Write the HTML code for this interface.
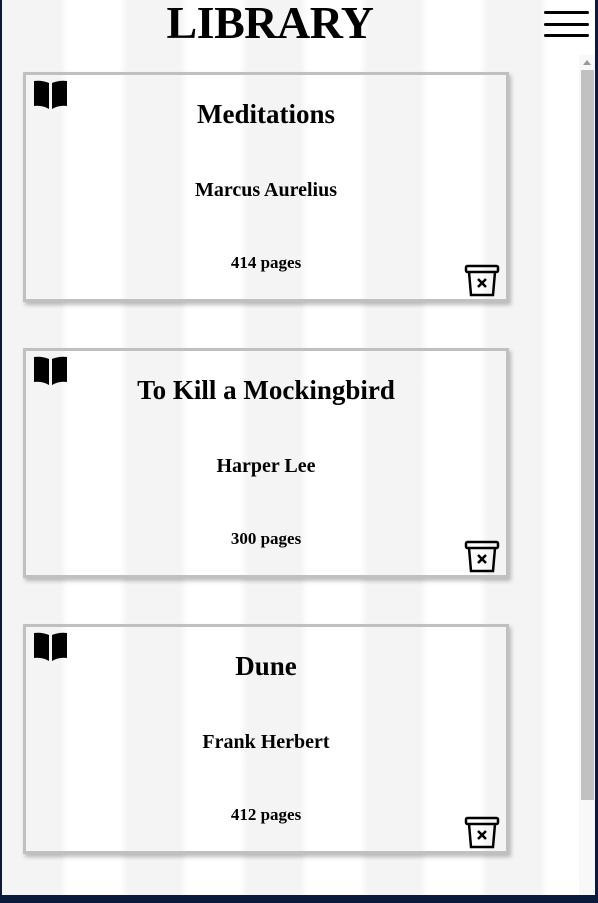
<!DOCTYPE html>
<html><head><style>
html,body{margin:0;padding:0;}
body{width:598px;height:903px;background:#0b1a3a;position:relative;overflow:hidden;font-family:"Liberation Serif",serif;}
#page{position:absolute;left:2px;top:0;width:593px;height:895px;
background:linear-gradient(to right,#f4f4f4 0,#f4f4f4 58px,#fff 66px,#fff 118px,#f4f4f4 126px,#f4f4f4 178px,#fff 186px,#fff 238px,#f4f4f4 246px,#f4f4f4 298px,#fff 306px,#fff 358px,#f4f4f4 366px,#f4f4f4 418px,#fff 426px,#fff 478px,#f4f4f4 486px,#f4f4f4 538px,#fff 546px);}
h1{position:absolute;left:0;width:536px;top:-4px;margin:0;text-align:center;font-size:46px;font-weight:bold;letter-spacing:-0.5px;}
.ham{position:absolute;left:542px;width:45px;height:3px;background:#000;border-radius:2px;}
.sb{position:absolute;left:577px;top:55px;width:16px;height:840px;background:#f8f8f8;}
.thumb{position:absolute;left:579px;top:70px;width:13px;height:730px;background:#c1c1c1;}
.card{position:absolute;left:21px;width:480px;height:224px;border:3px solid #c0c0c0;box-shadow:2px 3px 4px rgba(0,0,0,.25);text-align:center;}
.t{position:absolute;top:24px;width:100%;font-size:27px;font-weight:bold;}
.a{position:absolute;top:104px;width:100%;font-size:20px;font-weight:bold;}
.p{position:absolute;top:178px;width:100%;font-size:17px;font-weight:bold;}
.bk{position:absolute;left:7px;top:5px;}
.tr{position:absolute;left:438px;top:189px;}
</style></head><body><div id="page">
<h1>LIBRARY</h1>
<div class="ham" style="top:11px"></div><div class="ham" style="top:23px"></div><div class="ham" style="top:34px"></div>
<div class="sb"></div><div class="thumb"></div>
<svg style="position:absolute;left:580px;top:58px" width="10" height="8"><path d="M1 7L5 2L9 7Z" fill="#999"/></svg>

<div class="card" style="top:72px"><svg class="bk" width="35" height="30" viewBox="0 0 35 30"><path d="M1 1Q9 0 16 3V29Q9 25 1 26Z M34 1Q26 0 19 3V29Q26 25 34 26Z" fill="#000"/></svg>
<div class="t">Meditations</div><div class="a">Marcus Aurelius</div><div class="p">414 pages</div>
<svg class="tr" width="36" height="34" viewBox="0 0 36 34"><rect x="2" y="2" width="32" height="6" rx="1.5" fill="none" stroke="#000" stroke-width="2.5"/><path d="M5 8L7 31H29L31 8" fill="none" stroke="#000" stroke-width="2.5"/><path d="M14 15L22 23M22 15L14 23" stroke="#000" stroke-width="2.5"/></svg></div>

<div class="card" style="top:348px"><svg class="bk" width="35" height="30" viewBox="0 0 35 30"><path d="M1 1Q9 0 16 3V29Q9 25 1 26Z M34 1Q26 0 19 3V29Q26 25 34 26Z" fill="#000"/></svg>
<div class="t">To Kill a Mockingbird</div><div class="a">Harper Lee</div><div class="p">300 pages</div>
<svg class="tr" width="36" height="34" viewBox="0 0 36 34"><rect x="2" y="2" width="32" height="6" rx="1.5" fill="none" stroke="#000" stroke-width="2.5"/><path d="M5 8L7 31H29L31 8" fill="none" stroke="#000" stroke-width="2.5"/><path d="M14 15L22 23M22 15L14 23" stroke="#000" stroke-width="2.5"/></svg></div>

<div class="card" style="top:624px"><svg class="bk" width="35" height="30" viewBox="0 0 35 30"><path d="M1 1Q9 0 16 3V29Q9 25 1 26Z M34 1Q26 0 19 3V29Q26 25 34 26Z" fill="#000"/></svg>
<div class="t">Dune</div><div class="a">Frank Herbert</div><div class="p">412 pages</div>
<svg class="tr" width="36" height="34" viewBox="0 0 36 34"><rect x="2" y="2" width="32" height="6" rx="1.5" fill="none" stroke="#000" stroke-width="2.5"/><path d="M5 8L7 31H29L31 8" fill="none" stroke="#000" stroke-width="2.5"/><path d="M14 15L22 23M22 15L14 23" stroke="#000" stroke-width="2.5"/></svg></div>
</div></body></html>
